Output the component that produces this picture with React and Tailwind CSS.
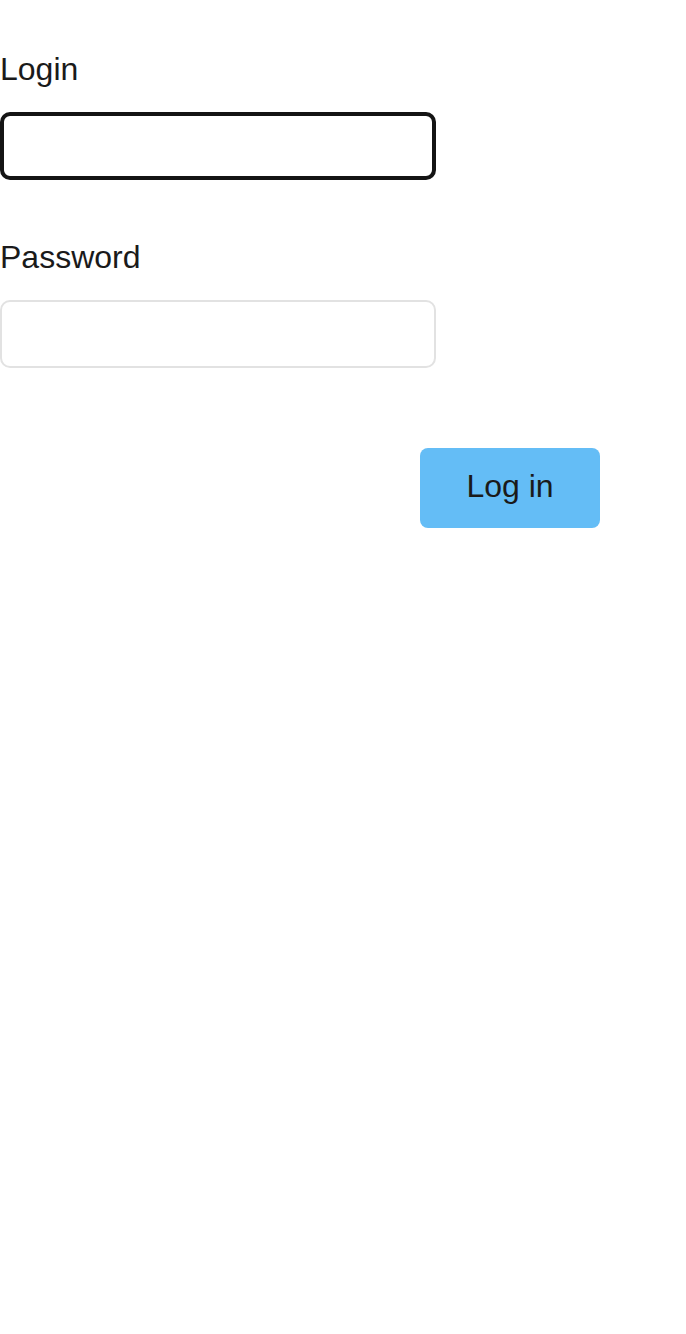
import React from 'react';

export default function App() {
  return (
    <div className="min-h-screen bg-white pt-[51px] text-[#1a1a1a] font-['Liberation_Sans',Arial,sans-serif]">
      <form className="flex w-[600px] flex-col" onSubmit={e => e.preventDefault()}>
        <label className="text-[32px] leading-[37px]" htmlFor="login">Login</label>
        <input
          id="login"
          type="text"
          className="mt-6 h-[68px] w-[436px] rounded-[10px] border-4 border-[#141414] bg-white px-3 text-[32px] outline-none"
        />

        <label className="mt-[59px] text-[32px] leading-[37px]" htmlFor="password">Password</label>
        <input
          id="password"
          type="password"
          className="mt-6 h-[68px] w-[436px] rounded-[10px] border-2 border-[#e2e2e2] bg-white px-3 text-[32px] outline-none"
        />

        <div className="mt-20 flex justify-end">
          <button
            type="submit"
            className="h-20 w-[180px] rounded-lg bg-[#64bdf6] pb-1 text-[32px] text-[#1a1a1a]"
          >
            Log in
          </button>
        </div>
      </form>
    </div>
  );
}
